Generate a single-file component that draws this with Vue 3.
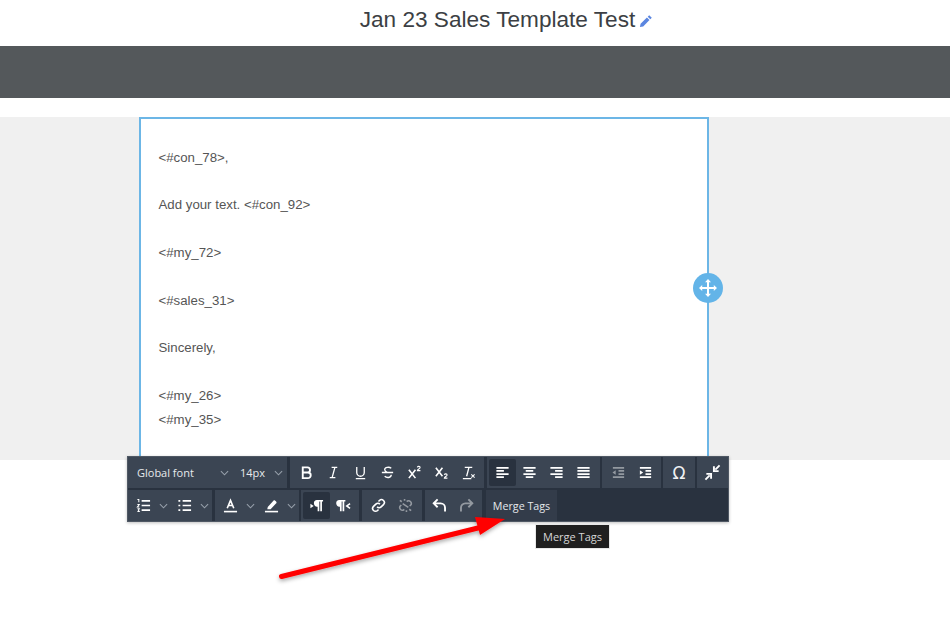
<script setup>
const lines = ['<#con_78>,', '', 'Add your text. <#con_92>', '', '<#my_72>', '', '<#sales_31>', '', 'Sincerely,', '', '<#my_26>', '<#my_35>']
</script>

<template>
  <div class="page">
    <header class="title">
      <h1>Jan 23 Sales Template Test</h1>
      <svg class="pencil" viewBox="0 0 14 14" width="14" height="14"><path d="M10.200 1.200l2.600 2.600-1.500 1.500-2.600-2.600zM7.900 3.500l2.600 2.600-6.300 6.300-3.300.7.7-3.300z" fill="#5b86e0"/></svg>
    </header>
    <div class="band"></div>
    <section class="stage">
      <div class="box">
        <p v-for="(l, i) in lines" :key="i" class="line">{{ l }}</p>
        <span class="handle">
          <svg viewBox="0 0 20 20" width="20" height="20"><path d="M10 1l3 3.200h-2V9h4.800V7l3.200 3-3.200 3v-2H11v4.800h2L10 19l-3-3.200h2V11H4.200v2L1 10l3.200-3v2H9V4.200H7z" fill="#fff"/></svg>
        </span>
      </div>
    </section>

    <div class="toolbar">
      <div class="row">
        <div class="grp g-font">
          <span class="sel font">Global font</span>
          <svg class="chev" viewBox="0 0 10 6"><path d="M1 1l4 4 4-4"/></svg>
          <span class="sel size">14px</span>
          <svg class="chev" viewBox="0 0 10 6"><path d="M1 1l4 4 4-4"/></svg>
        </div>
        <div class="grp g-format m3">
          <span class="cell"><svg class="ico" viewBox="0 0 16 16"><path class="s heavy" d="M4 2.500h5a2.700 2.700 0 010 5.500H4zM4 8h5.500a3 3 0 010 6H4z"/></svg></span>
          <span class="cell"><svg class="ico" viewBox="0 0 16 16"><path class="s thin" d="M6 2.500h6M4 13.500h6M9.500 2.500L6.500 13.500"/></svg></span>
          <span class="cell"><svg class="ico" viewBox="0 0 16 16"><path class="s thin" d="M4 2v6a4 4 0 008 0V2M3 14.500h10"/></svg></span>
          <span class="cell"><svg class="ico" viewBox="0 0 16 16"><path class="s thin" d="M12 3.500C10 1.800 5 2 5 5c0 1.500 1.500 2.300 3 3M5 12c2 2 7 2 7-1.500M2 8h12"/></svg></span>
          <span class="cell"><svg class="ico" viewBox="0 0 16 16"><path class="s" d="M2 5l7 9M9 5l-7 9"/><path class="s hair" d="M11 2.500c.5-1.500 3-1.300 3 .2 0 1.200-3 2-3 3.300h3.300"/></svg></span>
          <span class="cell"><svg class="ico" viewBox="0 0 16 16"><path class="s" d="M2 3l7 9M9 3l-7 9"/><path class="s hair" d="M11 10.500c.5-1.500 3-1.300 3 .2 0 1.200-3 2-3 3.300h3.300"/></svg></span>
          <span class="cell"><svg class="ico" viewBox="0 0 16 16"><path class="s thin" d="M4 2.500h8M8.500 2.500L6 12M2 14.500h9"/><path class="s hair" d="M11 10l3.500 3.500M14.500 10L11 13.500"/></svg></span>
        </div>
        <div class="grp g-align m3">
          <span class="cell on"><svg class="ico" viewBox="0 0 16 16"><path class="s bars" d="M1.500 3h13M1.500 6.300h8M1.500 9.700h13M1.500 13h8"/></svg></span>
          <span class="cell"><svg class="ico" viewBox="0 0 16 16"><path class="s bars" d="M1.500 3h13M4 6.300h8M1.500 9.700h13M4 13h8"/></svg></span>
          <span class="cell"><svg class="ico" viewBox="0 0 16 16"><path class="s bars" d="M1.500 3h13M6.500 6.300h8M1.500 9.700h13M6.500 13h8"/></svg></span>
          <span class="cell"><svg class="ico" viewBox="0 0 16 16"><path class="s bars" d="M1.500 3h13M1.500 6.300h13M1.500 9.700h13M1.500 13h13"/></svg></span>
        </div>
        <div class="grp g-indent m2">
          <span class="cell"><svg class="ico dim" viewBox="0 0 16 16"><path class="s bars" d="M2 3h12M8 6.300h6M8 9.700h6M2 13h12"/><path d="M5 5.500v5L1.500 8z" fill="#fff"/></svg></span>
          <span class="cell"><svg class="ico" viewBox="0 0 16 16"><path class="s bars" d="M2 3h12M8 6.300h6M8 9.700h6M2 13h12"/><path d="M2 5.500v5L5.500 8z" fill="#fff"/></svg></span>
        </div>
        <div class="grp g-one m2"><span class="omega">Ω</span></div>
        <div class="grp g-last m2">
          <svg class="ico big" viewBox="0 0 18 18"><path d="M16.500 1.500L12 6M10.500 2.500v5h5" class="s heavy"/><path d="M1.500 16.500L6 12M2.500 10.500h5v5" class="s heavy"/></svg>
        </div>
      </div>
      <div class="row">
        <div class="grp g-lists">
          <svg class="ico" viewBox="0 0 16 16"><path class="s bars" d="M6 3h9M6 8h9M6 13h9"/><path class="s hair" d="M1.500 1.500h1.500v3M1.500 7h2L1.500 9.500h2M1.500 11.500h2l-1 1.500 1 1.500h-2"/></svg>
          <svg class="chev" viewBox="0 0 10 6"><path d="M1 1l4 4 4-4"/></svg>
          <svg class="ico" viewBox="0 0 16 16"><path class="s bars" d="M6 3h9M6 8h9M6 13h9"/><path class="s bars" d="M1.500 3h2M1.500 8h2M1.500 13h2"/></svg>
          <svg class="chev" viewBox="0 0 10 6"><path d="M1 1l4 4 4-4"/></svg>
        </div>
        <div class="grp g-lists m3">
          <svg class="ico" viewBox="0 0 16 16"><path class="s" d="M4.500 11L8 2.500 11.500 11M5.700 8h4.600"/><path class="s" d="M1 14.500h14"/></svg>
          <svg class="chev" viewBox="0 0 10 6"><path d="M1 1l4 4 4-4"/></svg>
          <svg class="ico" viewBox="0 0 16 16"><path d="M4 9.500L10.500 2.500c.7-.7 3.500 1.800 2.800 2.700L7 12H3.500z" fill="#fff"/><path class="s" d="M1 14.500h14"/></svg>
          <svg class="chev" viewBox="0 0 10 6"><path d="M1 1l4 4 4-4"/></svg>
        </div>
        <div class="grp g-para m2">
          <span class="cell on"><svg class="ico" viewBox="0 0 16 16"><path d="M8.500 2H15v1.700h-1.200V14H12V3.700h-1V14H9.200V9.200a3.600 3.600 0 01-.7-7.200zM1.500 6L5 8.500 1.500 11z" fill="#fff"/></svg></span>
          <span class="cell"><svg class="ico" viewBox="0 0 16 16"><path d="M3.500 2H10v1.700H8.800V14H7V3.700H6V14H4.200V9.200a3.600 3.600 0 01-.7-7.200z" fill="#fff"/><path class="s" d="M15 6l-3.500 2.500L15 11"/></svg></span>
        </div>
        <div class="grp g-pair m3">
          <span class="cell"><svg class="ico" viewBox="0 0 16 16"><path class="s" d="M6.500 9.500a3 3 0 004.300 0l2.500-2.500a3 3 0 00-4.300-4.300L8 3.700M9.500 6.500a3 3 0 00-4.300 0L2.700 9a3 3 0 004.300 4.300l1-1"/></svg></span>
          <span class="cell"><svg class="ico dim" viewBox="0 0 16 16"><path class="s" d="M9.500 4l.5-.8a3 3 0 014 3.800l-1.500 1.500M6.500 12l-.5.800a3 3 0 01-4-3.800l1.500-1.500M5 6l6 4M2 2.500l2 1.500M12 12l2 1.500M7 1v2M9 13v2"/></svg></span>
        </div>
        <div class="grp g-undo m3">
          <span class="cell"><svg class="ico" viewBox="0 0 16 16"><path class="s heavy" d="M6 1.500L1.800 5.700 6 9.900M1.800 5.700h7.400a4.700 4.700 0 014.700 4.700V14.500"/></svg></span>
          <span class="cell"><svg class="ico dim" viewBox="0 0 16 16"><path class="s heavy" d="M10 1.500l4.200 4.200L10 9.900M14.200 5.700H6.800a4.700 4.700 0 00-4.700 4.700V14.500"/></svg></span>
        </div>
        <div class="grp tags m4"><span>Merge Tags</span></div>
      </div>
    </div>

    <div class="tip">Merge Tags</div>
    <svg class="arrow" viewBox="0 0 950 619" width="950" height="619">
      <defs><filter id="sh" x="-10%" y="-30%" width="120%" height="170%"><feDropShadow dx="0" dy="2" stdDeviation="2" flood-color="#000" flood-opacity=".35"/></filter></defs>
      <g filter="url(#sh)">
        <path d="M281.500 576.500L482 527" stroke="#f00" stroke-width="5" stroke-linecap="round" fill="none"/>
        <path d="M475 517L505 519 480 535z" fill="#f00"/>
      </g>
    </svg>
  </div>
</template>

<style>
html, body { margin: 0; background: #fff; overflow: hidden; }
</style>

<style scoped>
.page { position: relative; width: 950px; height: 619px; overflow: hidden; background: #fff; font-family: "Liberation Sans", Arial, sans-serif; }
.title { height: 46px; display: flex; justify-content: center; align-items: flex-start; gap: 4px; padding-left: 63px; box-sizing: border-box; }
.title h1 { margin: 7px 0 0; font-size: 22.600px; line-height: 26px; font-weight: 400; color: #3c3f44; }
.pencil { margin-top: 14px; }
.band { height: 52px; background: #54585b; }
.stage { margin-top: 19px; height: 343px; background: #f0f0f0; padding-left: 139px; box-sizing: border-box; }
.box { position: relative; width: 570px; height: 343px; box-sizing: border-box; background: #fff; border: 2px solid #6cb6e6; border-bottom: 0; padding: 26.700px 0 0 17.500px; }
.line { margin: 0; height: 23.850px; line-height: 23.850px; font-size: 13.250px; color: #555; white-space: pre; }
.handle { position: absolute; right: -16px; top: 154px; width: 30px; height: 30px; border-radius: 50%; background: #63b4e8; display: flex; align-items: center; justify-content: center; }
.toolbar { position: absolute; left: 127px; top: 456px; width: 602px; height: 66px; background: #29323f; border: 1px solid #4f5864; box-shadow: 0 1px 3px rgba(0,0,0,.25); display: flex; flex-direction: column; gap: 2px; box-sizing: border-box; }
.row { display: flex; height: 31px; }
.grp { display: flex; align-items: center; background: #3b4553; box-sizing: border-box; height: 31px; color: #fff; flex: none; }
.m2 { margin-left: 2px; }
.m3 { margin-left: 3px; }
.m4 { margin-left: 4px; }
.g-font { width: 159px; padding-left: 9px; }
.g-format { width: 194px; padding-left: 3px; }
.g-align { width: 113px; padding-left: 2px; }
.g-indent { width: 59px; padding-left: 3px; }
.g-one, .g-last { width: 32px; justify-content: center; }
.g-last { width: 31px; }
.g-lists { width: 84px; padding: 0 3px 0 8px; justify-content: space-between; }
.g-para { width: 58px; padding-left: 2px; }
.g-pair { width: 60px; padding-left: 3px; }
.g-undo { width: 57px; padding-left: 1px; }
.tags { width: 71px; background: #333c4a; justify-content: center; font-size: 10.700px; color: #e6e9ec; font-family: "Open Sans", sans-serif; }
.sel { font-family: "Open Sans", sans-serif; font-size: 11px; color: #e6e9ec; }
.font { width: 83px; flex: none; }
.size { margin-left: 11px; width: 34px; flex: none; }
.chev { width: 9px; height: 6px; flex: none; fill: none; stroke: #97a0ab; stroke-width: 1.200; }
.cell { width: 27px; height: 27px; border-radius: 2px; display: flex; align-items: center; justify-content: center; flex: none; }
.on { background: #29323f; }
.ico { width: 15px; height: 15px; flex: none; display: block; }
.big { width: 17px; height: 17px; }
.dim { opacity: .45; }
.s { fill: none; stroke: #fff; stroke-width: 1.700; }
.heavy { stroke-width: 2; }
.thin { stroke-width: 1.400; }
.hair { stroke-width: 1.100; }
.bars { stroke-width: 1.800; }
.omega { font-family: "DejaVu Sans", sans-serif; font-size: 17px; color: #f0f2f4; }
.tip { position: absolute; left: 536px; top: 525px; width: 73px; height: 23px; box-sizing: border-box; background: #1f1f1f; box-shadow: 0 0 0 1px #e8e8e8; color: #d6d6d6; font-family: "Open Sans", sans-serif; font-size: 11px; line-height: 23px; text-align: center; }
.arrow { position: absolute; left: 0; top: 0; pointer-events: none; }
</style>
